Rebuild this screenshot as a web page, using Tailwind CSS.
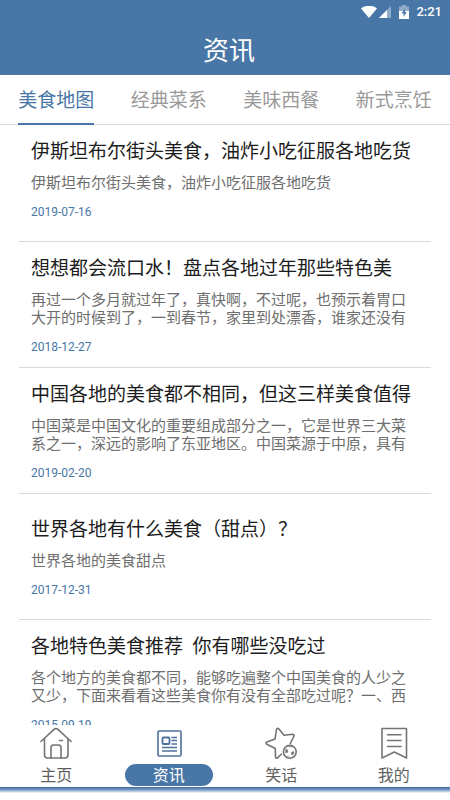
<!DOCTYPE html>
<html lang="zh-CN">
<head>
<meta charset="utf-8">
<meta name="viewport" content="width=device-width, initial-scale=1">
<title>资讯</title>
<script src="https://cdn.jsdelivr.net/npm/@tailwindcss/browser@4"></script>
</head>
<body class="flex h-screen flex-col overflow-hidden bg-white font-['Roboto','Noto_Sans_CJK_SC',sans-serif]">
  <header class="shrink-0 bg-[#4876a6] text-white">
    <div class="flex h-6 items-center justify-end pr-2">
      <svg class="h-3 w-4" viewBox="0 0 16 12" fill="currentColor" aria-label="Wi-Fi"><path d="M0 2.4C4.500-1 11.500-1 16 2.400L8 12Z"/></svg>
      <svg class="ml-0.5 h-3 w-3" viewBox="0 0 12 12" aria-label="信号"><path d="M12 0V12H0Z" fill="#fff" opacity=".4"/><path d="M8 4V12H0Z" fill="#fff"/></svg>
      <svg class="ml-2 h-[14px] w-[10px]" viewBox="0 0 10 14" aria-label="电池"><path d="M3 0H7V1.500H10V6H0V1.500H3Z" fill="#fff" opacity=".4"/><path d="M0 6H10V14H0Z" fill="#fff"/><path d="M5.800 3.500L2.500 8.500H4.600V12L7.700 7H5.800Z" fill="#4876a6"/></svg>
      <time class="ml-[7px] text-[13px] leading-6 font-medium">2:21</time>
    </div>
    <h1 class="h-[51px] pt-1 pl-2 text-center text-[26px] leading-[47px]">资讯</h1>
  </header>

  <nav class="grid h-[50px] shrink-0 grid-cols-4 justify-items-center border-b border-[#d9d9d9] text-[19px] leading-[52px] text-[#999]" aria-label="分类">
    <a href="#map" aria-current="true" class="h-[50px] border-b-2 border-[#4876a6] whitespace-nowrap text-[#4876a6]">美食地图</a>
    <a href="#classic" class="h-[50px] whitespace-nowrap">经典菜系</a>
    <a href="#western" class="h-[50px] whitespace-nowrap">美味西餐</a>
    <a href="#modern" class="h-[50px] whitespace-nowrap">新式烹饪</a>
  </nav>

  <main class="min-h-0 flex-1 overflow-y-auto px-[19px] [scrollbar-width:none]">
    <ul class="-mt-[9px]">
      <li class="flex h-[126px] flex-col justify-center border-b border-[#d9d9d9] px-3">
        <h2 class="overflow-hidden text-[19px] leading-[30px] whitespace-nowrap text-[#1c1c1c]">伊斯坦布尔街头美食，油炸小吃征服各地吃货</h2>
        <p class="mt-[7px] line-clamp-2 text-[15px] leading-[18px] text-[#6e6e6e]">伊斯坦布尔街头美食，油炸小吃征服各地吃货</p>
        <time class="mt-[11px] text-[12px] leading-[18px] text-[#4876a6]">2019-07-16</time>
      </li>
      <li class="flex h-[126px] flex-col justify-center border-b border-[#d9d9d9] px-3">
        <h2 class="overflow-hidden text-[19px] leading-[30px] whitespace-nowrap text-[#1c1c1c]">想想都会流口水！盘点各地过年那些特色美</h2>
        <p class="mt-[7px] line-clamp-2 text-[15px] leading-[18px] text-[#6e6e6e]">再过一个多月就过年了，真快啊，不过呢，也预示着胃口大开的时候到了，一到春节，家里到处漂香，谁家还没有</p>
        <time class="mt-[11px] text-[12px] leading-[18px] text-[#4876a6]">2018-12-27</time>
      </li>
      <li class="flex h-[126px] flex-col justify-center border-b border-[#d9d9d9] px-3">
        <h2 class="overflow-hidden text-[19px] leading-[30px] whitespace-nowrap text-[#1c1c1c]">中国各地的美食都不相同，但这三样美食值得</h2>
        <p class="mt-[7px] line-clamp-2 text-[15px] leading-[18px] text-[#6e6e6e]">中国菜是中国文化的重要组成部分之一，它是世界三大菜系之一，深远的影响了东亚地区。中国菜源于中原，具有</p>
        <time class="mt-[11px] text-[12px] leading-[18px] text-[#4876a6]">2019-02-20</time>
      </li>
      <li class="flex h-[126px] flex-col justify-center border-b border-[#d9d9d9] px-3">
        <h2 class="overflow-hidden text-[19px] leading-[30px] whitespace-nowrap text-[#1c1c1c]">世界各地有什么美食（甜点）？</h2>
        <p class="mt-[7px] line-clamp-2 text-[15px] leading-[18px] text-[#6e6e6e]">世界各地的美食甜点</p>
        <time class="mt-[11px] text-[12px] leading-[18px] text-[#4876a6]">2017-12-31</time>
      </li>
      <li class="flex h-[126px] flex-col justify-center border-b border-[#d9d9d9] px-3">
        <h2 class="overflow-hidden text-[19px] leading-[30px] whitespace-pre text-[#1c1c1c]">各地特色美食推荐  你有哪些没吃过</h2>
        <p class="mt-[7px] line-clamp-2 text-[15px] leading-[18px] text-[#6e6e6e]">各个地方的美食都不同，能够吃遍整个中国美食的人少之又少，下面来看看这些美食你有没有全部吃过呢？一、西</p>
        <time class="mt-[11px] text-[12px] leading-[18px] text-[#4876a6]">2015-09-19</time>
      </li>
    </ul>
  </main>

  <footer class="shrink-0 bg-white pb-[7px]">
    <nav class="grid grid-cols-4 pb-px text-center text-base leading-5 text-[#5f5f5f]" aria-label="主导航">
      <a href="#home" class="flex flex-col items-center pt-[2px]">
        <svg class="h-8 w-8" viewBox="0 0 32 32" fill="none" stroke="#747474" stroke-width="1.600" stroke-linecap="round" stroke-linejoin="round" aria-hidden="true"><path d="M1 14.500L13.500 2.800Q16 .6 18.500 2.800L31 14.500"/><path d="M4.500 11.500V28Q4.500 31 7.500 31H25Q28 31 28 28V11.500"/><path d="M11 31V20.500Q11 18 13.500 18H18.500Q21 18 21 20.500V31M19.500 13.500H22.500"/></svg>
        <span class="mt-[5px] w-[88px] rounded-full pt-[2px]">主页</span>
      </a>
      <a href="#news" aria-current="page" class="flex flex-col items-center pt-[2px]">
        <svg class="h-8 w-8" viewBox="0 0 32 32" fill="none" stroke="#4d719c" stroke-width="1.600" stroke-linejoin="round" aria-hidden="true"><rect x="5" y="4" width="23" height="25" rx="1"/><rect x="9.500" y="10.500" width="7" height="6.500" rx="1" stroke-width="1.800"/><path d="M18.500 10.500H24M18.500 13.500H24M18.500 17H24M9 20.500H24M9 24H24" stroke-width="1.300"/></svg>
        <span class="mt-[5px] w-[88px] rounded-full bg-[#4876a6] pt-[2px] text-white">资讯</span>
      </a>
      <a href="#jokes" class="flex flex-col items-center pt-[2px]">
        <svg class="h-8 w-8" viewBox="0 0 32 32" fill="none" stroke="#747474" stroke-width="1.600" stroke-linecap="round" stroke-linejoin="round" aria-hidden="true"><path d="M16.500 27L12.500 30.800Q10.500 32 10.500 29.500L10.300 21.500L1.800 17.200Q0 16 2 15L10 12L11.500 2.500Q12.300 .5 14 2L19 8.300L27.500 7.300Q30 7.300 28.800 9.500L25.300 16.500"/><circle cx="24.800" cy="24.800" r="6.400"/><path d="M21 22L23 23.500L22.500 25.500L20.500 25.500ZM26.500 25.500L28.500 24.500L29 26.500L27 28ZM24.500 19.500L26.500 20L27.500 19.500M22.500 29.500L24 29" fill="#747474" stroke-width=".6"/></svg>
        <span class="mt-[5px] w-[88px] rounded-full pt-[2px]">笑话</span>
      </a>
      <a href="#mine" class="flex flex-col items-center pt-[2px]">
        <svg class="h-8 w-8" viewBox="0 0 32 32" fill="none" stroke="#747474" stroke-width="1.600" stroke-linecap="round" stroke-linejoin="round" aria-hidden="true"><path d="M4 1.500H28.500V31L16.300 25L4 31Z"/><path d="M9.500 7.800H23M9.500 13.500H23M9.500 19.500H23"/></svg>
        <span class="mt-[5px] w-[88px] rounded-full pt-[2px]">我的</span>
      </a>
    </nav>
    <div class="h-[6px] bg-linear-to-b from-[#41689b] via-[#7ea0c6] to-white"></div>
  </footer>
</body>
</html>
